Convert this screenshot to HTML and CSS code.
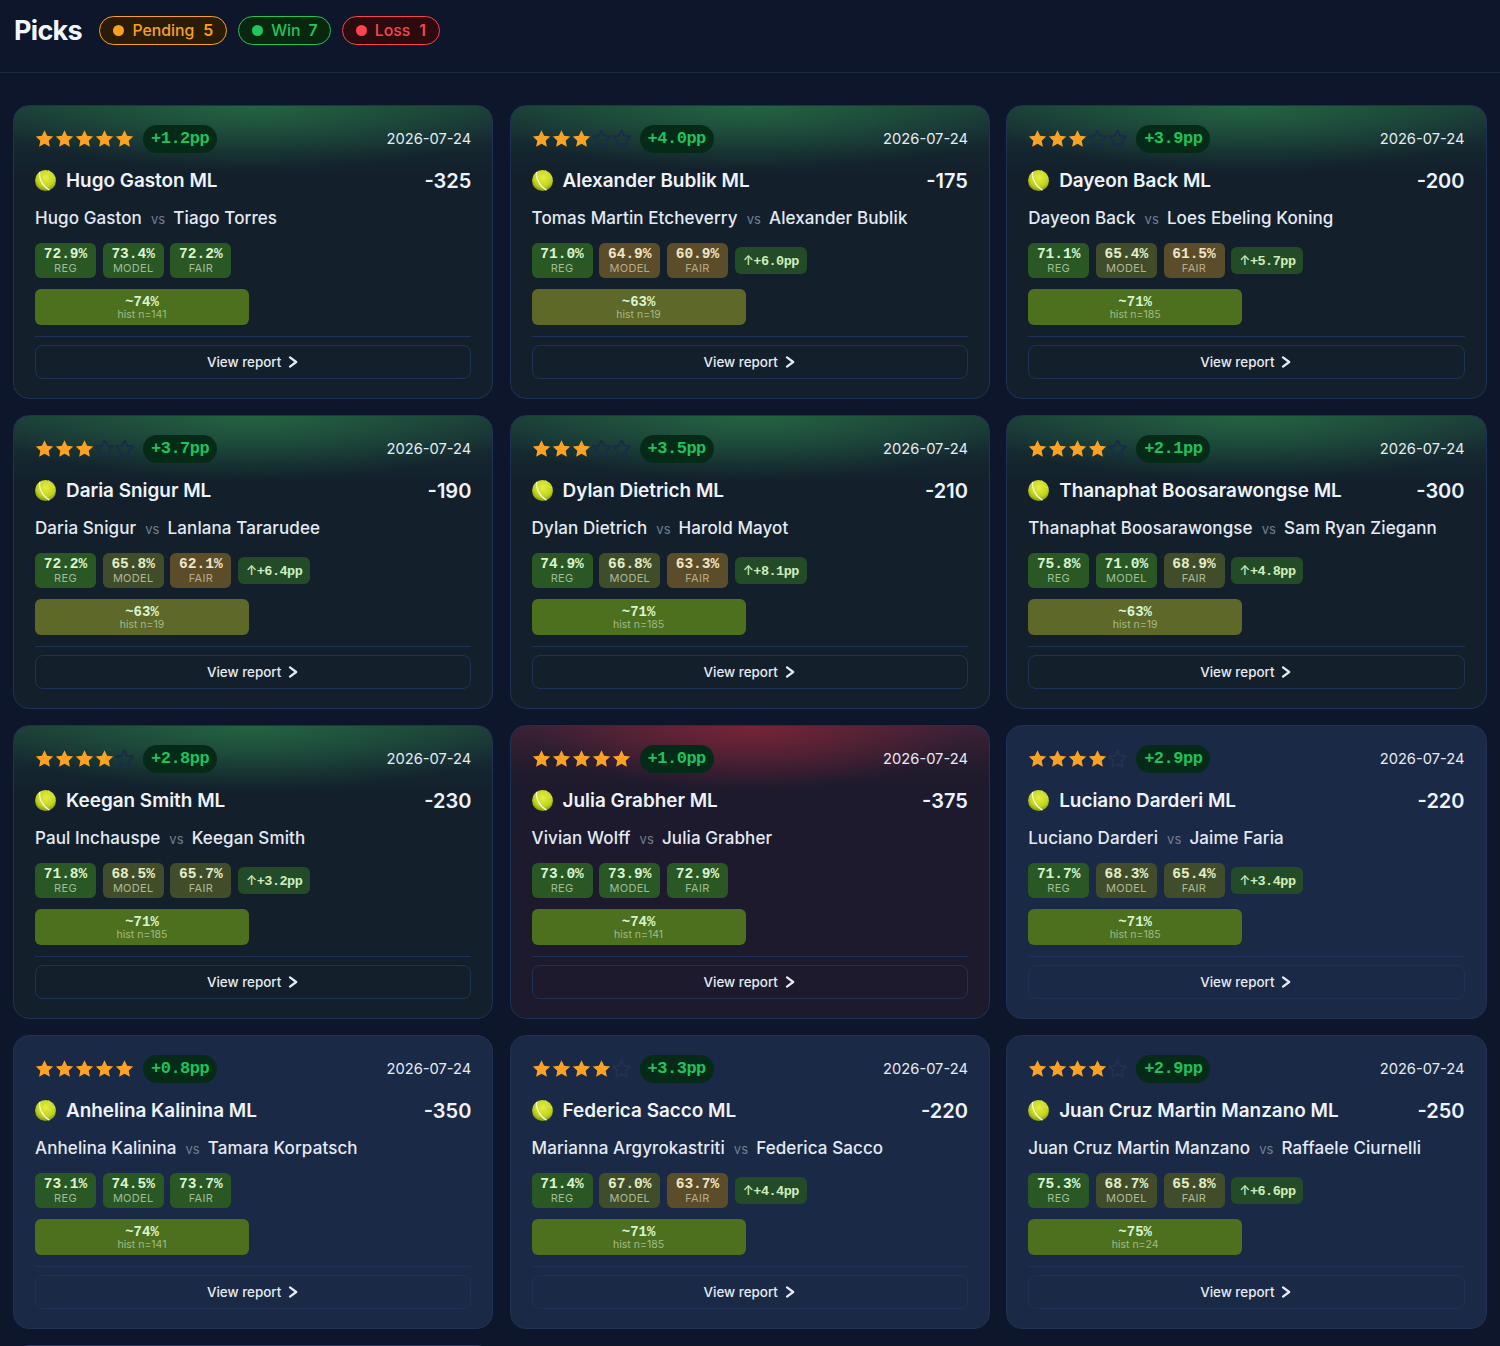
FILE: index.html
```html
<!DOCTYPE html>
<html lang="en">
<head>
<meta charset="utf-8">
<title>Picks</title>
<link rel="stylesheet" href="styles.css">
</head>
<body>
<svg class="defs" width="0" height="0" aria-hidden="true">
  <defs>
    <symbol id="star" viewBox="0 1 24 24"><path d="M12 1.200l3.300 7.100 7.700.9-5.700 5.300 1.500 7.700L12 18.400l-6.800 3.800 1.500-7.700L1 9.200l7.700-.9z"/></symbol>
    <radialGradient id="ballfill" cx="52%" cy="36%" r="70%"><stop offset="0" stop-color="#e6ee40"/><stop offset=".6" stop-color="#c2d41f"/><stop offset="1" stop-color="#6f8a0e"/></radialGradient>
    <symbol id="ball" viewBox="0 0 24 24">
      <circle cx="12" cy="12" r="12" fill="url(#ballfill)"/>
      <path d="M5.500 2.200C4 8.500 8 18 16.500 23" fill="none" stroke="#f4f7d8" stroke-width="1.500"/>
      <path d="M15.500 .5c.5 4 3 7.500 8 8.700" fill="none" stroke="#d9e75a" stroke-width="1"/>
    </symbol>
    <symbol id="chev" viewBox="0 0 12 12"><path d="M3 1.300L9.200 6 3 10.700" fill="none" stroke="currentColor" stroke-width="2.200" stroke-linecap="round" stroke-linejoin="round"/></symbol>
  </defs>
</svg>
<div class="page">
<header class="top">
  <h1>Picks</h1>
  <span class="pill pending"><i></i>Pending<b>5</b></span>
  <span class="pill win"><i></i>Win<b>7</b></span>
  <span class="pill loss"><i></i>Loss<b>1</b></span>
</header>
<main class="grid">

<article class="card green">
  <div class="head"><span class="stars"><svg class="on"><use href="#star"/></svg><svg class="on"><use href="#star"/></svg><svg class="on"><use href="#star"/></svg><svg class="on"><use href="#star"/></svg><svg class="on"><use href="#star"/></svg></span><span class="pp">+1.2pp</span><span class="date">2026-07-24</span></div>
  <div class="pick"><svg class="ball"><use href="#ball"/></svg><span class="name">Hugo Gaston ML</span><span class="odds">-325</span></div>
  <div class="match"><span>Hugo Gaston</span><em>vs</em><span>Tiago Torres</span></div>
  <div class="tiles"><div class="tile g"><b>72.9%</b><small>REG</small></div><div class="tile g"><b>73.4%</b><small>MODEL</small></div><div class="tile g"><b>72.2%</b><small>FAIR</small></div></div>
  <div class="hist"><b>~74%</b><small>hist n=141</small></div>
  <button class="report">View report<svg><use href="#chev"/></svg></button>
</article>

<article class="card green">
  <div class="head"><span class="stars"><svg class="on"><use href="#star"/></svg><svg class="on"><use href="#star"/></svg><svg class="on"><use href="#star"/></svg><svg class="off"><use href="#star"/></svg><svg class="off"><use href="#star"/></svg></span><span class="pp">+4.0pp</span><span class="date">2026-07-24</span></div>
  <div class="pick"><svg class="ball"><use href="#ball"/></svg><span class="name">Alexander Bublik ML</span><span class="odds">-175</span></div>
  <div class="match"><span>Tomas Martin Etcheverry</span><em>vs</em><span>Alexander Bublik</span></div>
  <div class="tiles"><div class="tile g"><b>71.0%</b><small>REG</small></div><div class="tile t"><b>64.9%</b><small>MODEL</small></div><div class="tile t"><b>60.9%</b><small>FAIR</small></div><span class="delta"><span class="arr">↑</span>+6.0pp</span></div>
  <div class="hist low"><b>~63%</b><small>hist n=19</small></div>
  <button class="report">View report<svg><use href="#chev"/></svg></button>
</article>

<article class="card green">
  <div class="head"><span class="stars"><svg class="on"><use href="#star"/></svg><svg class="on"><use href="#star"/></svg><svg class="on"><use href="#star"/></svg><svg class="off"><use href="#star"/></svg><svg class="off"><use href="#star"/></svg></span><span class="pp">+3.9pp</span><span class="date">2026-07-24</span></div>
  <div class="pick"><svg class="ball"><use href="#ball"/></svg><span class="name">Dayeon Back ML</span><span class="odds">-200</span></div>
  <div class="match"><span>Dayeon Back</span><em>vs</em><span>Loes Ebeling Koning</span></div>
  <div class="tiles"><div class="tile g"><b>71.1%</b><small>REG</small></div><div class="tile o"><b>65.4%</b><small>MODEL</small></div><div class="tile t"><b>61.5%</b><small>FAIR</small></div><span class="delta"><span class="arr">↑</span>+5.7pp</span></div>
  <div class="hist"><b>~71%</b><small>hist n=185</small></div>
  <button class="report">View report<svg><use href="#chev"/></svg></button>
</article>

<article class="card green">
  <div class="head"><span class="stars"><svg class="on"><use href="#star"/></svg><svg class="on"><use href="#star"/></svg><svg class="on"><use href="#star"/></svg><svg class="off"><use href="#star"/></svg><svg class="off"><use href="#star"/></svg></span><span class="pp">+3.7pp</span><span class="date">2026-07-24</span></div>
  <div class="pick"><svg class="ball"><use href="#ball"/></svg><span class="name">Daria Snigur ML</span><span class="odds">-190</span></div>
  <div class="match"><span>Daria Snigur</span><em>vs</em><span>Lanlana Tararudee</span></div>
  <div class="tiles"><div class="tile g"><b>72.2%</b><small>REG</small></div><div class="tile o"><b>65.8%</b><small>MODEL</small></div><div class="tile t"><b>62.1%</b><small>FAIR</small></div><span class="delta"><span class="arr">↑</span>+6.4pp</span></div>
  <div class="hist low"><b>~63%</b><small>hist n=19</small></div>
  <button class="report">View report<svg><use href="#chev"/></svg></button>
</article>

<article class="card green">
  <div class="head"><span class="stars"><svg class="on"><use href="#star"/></svg><svg class="on"><use href="#star"/></svg><svg class="on"><use href="#star"/></svg><svg class="off"><use href="#star"/></svg><svg class="off"><use href="#star"/></svg></span><span class="pp">+3.5pp</span><span class="date">2026-07-24</span></div>
  <div class="pick"><svg class="ball"><use href="#ball"/></svg><span class="name">Dylan Dietrich ML</span><span class="odds">-210</span></div>
  <div class="match"><span>Dylan Dietrich</span><em>vs</em><span>Harold Mayot</span></div>
  <div class="tiles"><div class="tile g"><b>74.9%</b><small>REG</small></div><div class="tile o"><b>66.8%</b><small>MODEL</small></div><div class="tile t"><b>63.3%</b><small>FAIR</small></div><span class="delta"><span class="arr">↑</span>+8.1pp</span></div>
  <div class="hist"><b>~71%</b><small>hist n=185</small></div>
  <button class="report">View report<svg><use href="#chev"/></svg></button>
</article>

<article class="card green">
  <div class="head"><span class="stars"><svg class="on"><use href="#star"/></svg><svg class="on"><use href="#star"/></svg><svg class="on"><use href="#star"/></svg><svg class="on"><use href="#star"/></svg><svg class="off"><use href="#star"/></svg></span><span class="pp">+2.1pp</span><span class="date">2026-07-24</span></div>
  <div class="pick"><svg class="ball"><use href="#ball"/></svg><span class="name">Thanaphat Boosarawongse ML</span><span class="odds">-300</span></div>
  <div class="match"><span>Thanaphat Boosarawongse</span><em>vs</em><span>Sam Ryan Ziegann</span></div>
  <div class="tiles"><div class="tile g"><b>75.8%</b><small>REG</small></div><div class="tile g"><b>71.0%</b><small>MODEL</small></div><div class="tile o"><b>68.9%</b><small>FAIR</small></div><span class="delta"><span class="arr">↑</span>+4.8pp</span></div>
  <div class="hist low"><b>~63%</b><small>hist n=19</small></div>
  <button class="report">View report<svg><use href="#chev"/></svg></button>
</article>

<article class="card green">
  <div class="head"><span class="stars"><svg class="on"><use href="#star"/></svg><svg class="on"><use href="#star"/></svg><svg class="on"><use href="#star"/></svg><svg class="on"><use href="#star"/></svg><svg class="off"><use href="#star"/></svg></span><span class="pp">+2.8pp</span><span class="date">2026-07-24</span></div>
  <div class="pick"><svg class="ball"><use href="#ball"/></svg><span class="name">Keegan Smith ML</span><span class="odds">-230</span></div>
  <div class="match"><span>Paul Inchauspe</span><em>vs</em><span>Keegan Smith</span></div>
  <div class="tiles"><div class="tile g"><b>71.8%</b><small>REG</small></div><div class="tile o"><b>68.5%</b><small>MODEL</small></div><div class="tile o"><b>65.7%</b><small>FAIR</small></div><span class="delta"><span class="arr">↑</span>+3.2pp</span></div>
  <div class="hist"><b>~71%</b><small>hist n=185</small></div>
  <button class="report">View report<svg><use href="#chev"/></svg></button>
</article>

<article class="card red">
  <div class="head"><span class="stars"><svg class="on"><use href="#star"/></svg><svg class="on"><use href="#star"/></svg><svg class="on"><use href="#star"/></svg><svg class="on"><use href="#star"/></svg><svg class="on"><use href="#star"/></svg></span><span class="pp">+1.0pp</span><span class="date">2026-07-24</span></div>
  <div class="pick"><svg class="ball"><use href="#ball"/></svg><span class="name">Julia Grabher ML</span><span class="odds">-375</span></div>
  <div class="match"><span>Vivian Wolff</span><em>vs</em><span>Julia Grabher</span></div>
  <div class="tiles"><div class="tile g"><b>73.0%</b><small>REG</small></div><div class="tile g"><b>73.9%</b><small>MODEL</small></div><div class="tile g"><b>72.9%</b><small>FAIR</small></div></div>
  <div class="hist"><b>~74%</b><small>hist n=141</small></div>
  <button class="report">View report<svg><use href="#chev"/></svg></button>
</article>

<article class="card">
  <div class="head"><span class="stars"><svg class="on"><use href="#star"/></svg><svg class="on"><use href="#star"/></svg><svg class="on"><use href="#star"/></svg><svg class="on"><use href="#star"/></svg><svg class="off"><use href="#star"/></svg></span><span class="pp">+2.9pp</span><span class="date">2026-07-24</span></div>
  <div class="pick"><svg class="ball"><use href="#ball"/></svg><span class="name">Luciano Darderi ML</span><span class="odds">-220</span></div>
  <div class="match"><span>Luciano Darderi</span><em>vs</em><span>Jaime Faria</span></div>
  <div class="tiles"><div class="tile g"><b>71.7%</b><small>REG</small></div><div class="tile o"><b>68.3%</b><small>MODEL</small></div><div class="tile o"><b>65.4%</b><small>FAIR</small></div><span class="delta"><span class="arr">↑</span>+3.4pp</span></div>
  <div class="hist"><b>~71%</b><small>hist n=185</small></div>
  <button class="report">View report<svg><use href="#chev"/></svg></button>
</article>

<article class="card">
  <div class="head"><span class="stars"><svg class="on"><use href="#star"/></svg><svg class="on"><use href="#star"/></svg><svg class="on"><use href="#star"/></svg><svg class="on"><use href="#star"/></svg><svg class="on"><use href="#star"/></svg></span><span class="pp">+0.8pp</span><span class="date">2026-07-24</span></div>
  <div class="pick"><svg class="ball"><use href="#ball"/></svg><span class="name">Anhelina Kalinina ML</span><span class="odds">-350</span></div>
  <div class="match"><span>Anhelina Kalinina</span><em>vs</em><span>Tamara Korpatsch</span></div>
  <div class="tiles"><div class="tile g"><b>73.1%</b><small>REG</small></div><div class="tile g"><b>74.5%</b><small>MODEL</small></div><div class="tile g"><b>73.7%</b><small>FAIR</small></div></div>
  <div class="hist"><b>~74%</b><small>hist n=141</small></div>
  <button class="report">View report<svg><use href="#chev"/></svg></button>
</article>

<article class="card">
  <div class="head"><span class="stars"><svg class="on"><use href="#star"/></svg><svg class="on"><use href="#star"/></svg><svg class="on"><use href="#star"/></svg><svg class="on"><use href="#star"/></svg><svg class="off"><use href="#star"/></svg></span><span class="pp">+3.3pp</span><span class="date">2026-07-24</span></div>
  <div class="pick"><svg class="ball"><use href="#ball"/></svg><span class="name">Federica Sacco ML</span><span class="odds">-220</span></div>
  <div class="match"><span>Marianna Argyrokastriti</span><em>vs</em><span>Federica Sacco</span></div>
  <div class="tiles"><div class="tile g"><b>71.4%</b><small>REG</small></div><div class="tile o"><b>67.0%</b><small>MODEL</small></div><div class="tile t"><b>63.7%</b><small>FAIR</small></div><span class="delta"><span class="arr">↑</span>+4.4pp</span></div>
  <div class="hist"><b>~71%</b><small>hist n=185</small></div>
  <button class="report">View report<svg><use href="#chev"/></svg></button>
</article>

<article class="card">
  <div class="head"><span class="stars"><svg class="on"><use href="#star"/></svg><svg class="on"><use href="#star"/></svg><svg class="on"><use href="#star"/></svg><svg class="on"><use href="#star"/></svg><svg class="off"><use href="#star"/></svg></span><span class="pp">+2.9pp</span><span class="date">2026-07-24</span></div>
  <div class="pick"><svg class="ball"><use href="#ball"/></svg><span class="name">Juan Cruz Martin Manzano ML</span><span class="odds">-250</span></div>
  <div class="match"><span>Juan Cruz Martin Manzano</span><em>vs</em><span>Raffaele Ciurnelli</span></div>
  <div class="tiles"><div class="tile g"><b>75.3%</b><small>REG</small></div><div class="tile o"><b>68.7%</b><small>MODEL</small></div><div class="tile o"><b>65.8%</b><small>FAIR</small></div><span class="delta"><span class="arr">↑</span>+6.6pp</span></div>
  <div class="hist"><b>~75%</b><small>hist n=24</small></div>
  <button class="report">View report<svg><use href="#chev"/></svg></button>
</article>

<article class="card next" aria-hidden="true"></article>
</main>
</div>
</body>
</html>
```

FILE: styles.css
```css
* { box-sizing: border-box; }
html, body { margin: 0; height: 100%; overflow: hidden; }
body {
  background: #0d162a;
  color: #eef3fb;
  font-family: Inter, "Liberation Sans", sans-serif;
}
.defs { position: absolute; }
.page { height: 1346px; overflow: hidden; }

.top {
  display: flex;
  align-items: center;
  gap: 11px;
  height: 73px;
  padding: 0 14px 12px;
  border-bottom: 1px solid #1b2740;
}
.top h1 {
  margin: 0 6.500px 0 0;
  font-size: 27px;
  font-weight: 700;
  letter-spacing: -.7px;
  color: #f1f5fc;
}
.pill {
  display: inline-flex;
  align-items: center;
  height: 29px;
  padding: 0 13px;
  border: 1px solid;
  border-radius: 15px;
  font-size: 15.800px;
  font-weight: 500;
}
.pill i { width: 11px; height: 11px; border-radius: 50%; margin-right: 8px; background: currentColor; }
.pill b { margin-left: 9px; font-weight: 600; }
.pending { color: #f9a11f; border-color: #f9a11f; background: #2b1c08; }
.win { color: #23c45e; border-color: #23c45e; background: #07280f; padding: 0 12px 0 13px; }
.win b { margin-left: 8px; }
.loss { color: #fb4450; border-color: #fb4450; background: #2c0a0d; }

.grid {
  display: grid;
  grid-template-columns: repeat(3, 1fr);
  gap: 16px 16.250px;
  padding: 32px 13.500px 0 13px;
}
.card {
  display: flex;
  flex-direction: column;
  height: 294px;
  padding: 19px 21px 19px;
  border: 1px solid #1f3255;
  border-radius: 16px;
  background: #1a2945;
}
.card.green {
  background:
    radial-gradient(ellipse 58% 64px at 50% 0, rgba(38, 112, 70, .75), rgba(38, 112, 70, 0)),
    linear-gradient(#1b3c36 0, #172f33 25px, #14252e 45px, #13202c 68px);
}
.card.red {
  background:
    radial-gradient(ellipse 46% 64px at 50% 0, rgba(130, 36, 56, .85), rgba(130, 36, 56, 0)),
    linear-gradient(#3c2135 0, #2c1e30 25px, #221b2e 45px, #1c1a2c 68px);
}
.card.next { border-color: #2a3a5c; }

.head { display: flex; align-items: center; height: 28px; }
.stars { display: flex; gap: 1px; margin-right: 9px; }
.stars svg { display: block; width: 19px; height: 19px; }
.stars .on { fill: #fba224; }
.stars .off { fill: none; stroke: #20324f; stroke-width: 2.500; }
.green .stars .off { stroke: #1a2d47; }
.pp {
  height: 28px;
  padding: 0 8px;
  border-radius: 14px;
  background: #052b18;
  color: #1fc25c;
  font: 700 17px/28px "Liberation Mono", monospace;
  letter-spacing: -.5px;
}
.date { margin-left: auto; font-size: 14.700px; color: #e6ebf4; }

.pick { display: flex; align-items: center; margin-top: 13px; height: 28px; }
.ball { width: 21px; height: 21px; margin-right: 10px; flex: none; }
.name { font-size: 18.900px; font-weight: 600; color: #eef3fb; }
.odds { margin-left: auto; padding-top: 1px; font-size: 20px; font-weight: 600; }

.match {
  display: flex;
  align-items: baseline;
  margin-top: 12px;
  height: 24px;
  font-size: 17px;
  font-weight: 500;
  letter-spacing: .1px;
  line-height: 24px;
  color: #e4eaf4;
}
.match em { margin: 0 8px 0 9px; font-size: 13px; font-style: normal; font-weight: 400; color: #717e92; }

.tiles { display: flex; align-items: center; gap: 6.700px; margin-top: 13px; height: 35px; }
.tile {
  display: flex;
  flex-direction: column;
  align-items: center;
  justify-content: center;
  width: 61px;
  height: 35px;
  padding-top: 1px;
  border-radius: 6px;
}
.tile b { font: 700 14.500px/15px "Liberation Mono", monospace; }
.tile small { font-size: 11px; line-height: 13px; letter-spacing: .3px; }
.tile.g { background: #2a5825; color: #d9f4cf; }
.tile.g small { color: #9ebd98; }
.tile.o { background: #414d2a; color: #e2edc8; }
.tile.o small { color: #aeb996; }
.tile.t { background: #5c4d2a; color: #efe6c8; }
.tile.t small { color: #b8ab8c; }
.delta {
  height: 27px;
  padding: 0 8px;
  border-radius: 6px;
  background: #234b28;
  color: #cdeebc;
  font: 700 13.500px/27px "Liberation Mono", monospace;
  letter-spacing: -.5px;
}
.arr { font-family: Inter, sans-serif; font-weight: 500; font-size: 13px; }

.hist {
  display: flex;
  flex-direction: column;
  align-items: center;
  justify-content: center;
  width: 214px;
  height: 36px;
  margin-top: 11px;
  padding-top: 1px;
  border-radius: 6px;
  background: #4c701e;
  color: #d9f4cf;
}
.hist.low { background: #5d6829; }
.hist b { font: 700 14px/14px "Liberation Mono", monospace; }
.hist small { font-size: 10.500px; line-height: 12px; color: #a2bb88; }

.report {
  display: flex;
  align-items: center;
  justify-content: center;
  gap: 6px;
  height: 43px;
  margin-top: 11px;
  padding: 7px 0 0;
  border: 0;
  border-top: 1px solid #1f3255;
  background: none;
  color: #e6ebf4;
  font: 500 13.400px Inter, "Liberation Sans", sans-serif;
  position: relative;
}
.report::after {
  content: "";
  position: absolute;
  inset: 8px 0 0;
  border: 1px solid #1f3255;
  border-radius: 8px;
}
.report svg { width: 12px; height: 12px; }
```
